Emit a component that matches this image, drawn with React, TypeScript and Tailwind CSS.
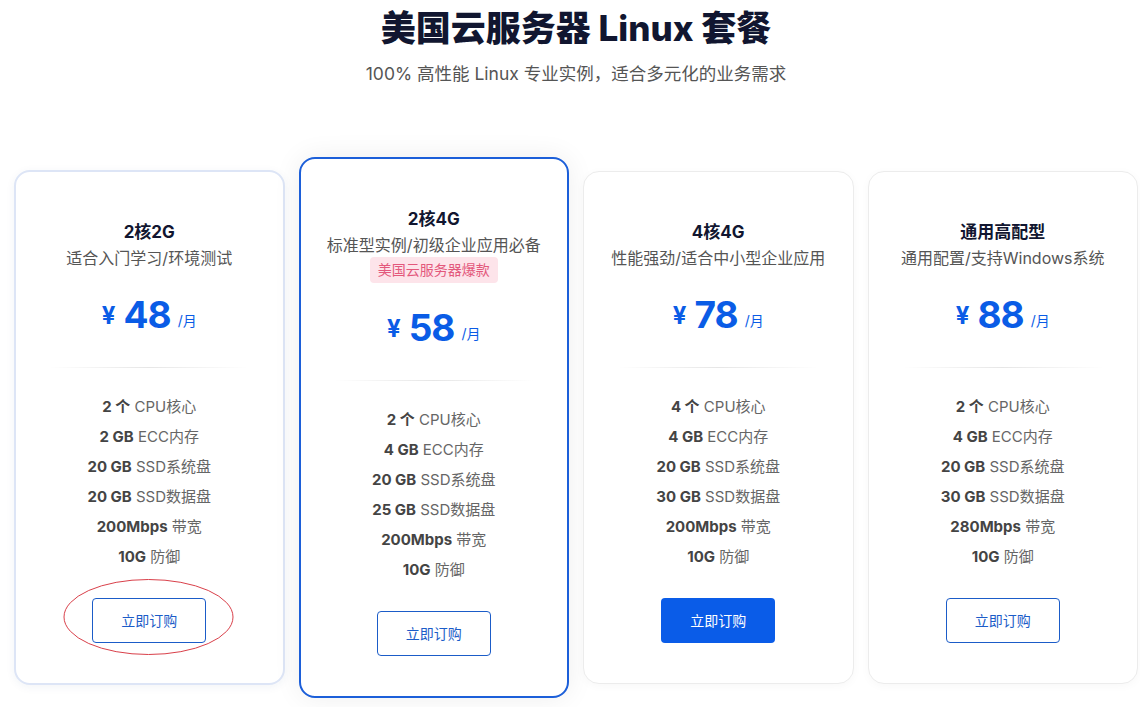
type Feature = { strong: string; rest: string };

interface Plan {
  name: string;
  desc: string;
  price: string;
  badge?: string;
  features: Feature[];
  variant: "soft" | "featured" | "plain";
  filled?: boolean;
  circled?: boolean;
}

const plans: Plan[] = [
  {
    name: "2核2G",
    desc: "适合入门学习/环境测试",
    price: "48",
    variant: "soft",
    circled: true,
    features: [
      { strong: "2 个", rest: "CPU核心" },
      { strong: "2 GB", rest: "ECC内存" },
      { strong: "20 GB", rest: "SSD系统盘" },
      { strong: "20 GB", rest: "SSD数据盘" },
      { strong: "200Mbps", rest: "带宽" },
      { strong: "10G", rest: "防御" },
    ],
  },
  {
    name: "2核4G",
    desc: "标准型实例/初级企业应用必备",
    badge: "美国云服务器爆款",
    price: "58",
    variant: "featured",
    features: [
      { strong: "2 个", rest: "CPU核心" },
      { strong: "4 GB", rest: "ECC内存" },
      { strong: "20 GB", rest: "SSD系统盘" },
      { strong: "25 GB", rest: "SSD数据盘" },
      { strong: "200Mbps", rest: "带宽" },
      { strong: "10G", rest: "防御" },
    ],
  },
  {
    name: "4核4G",
    desc: "性能强劲/适合中小型企业应用",
    price: "78",
    variant: "plain",
    filled: true,
    features: [
      { strong: "4 个", rest: "CPU核心" },
      { strong: "4 GB", rest: "ECC内存" },
      { strong: "20 GB", rest: "SSD系统盘" },
      { strong: "30 GB", rest: "SSD数据盘" },
      { strong: "200Mbps", rest: "带宽" },
      { strong: "10G", rest: "防御" },
    ],
  },
  {
    name: "通用高配型",
    desc: "通用配置/支持Windows系统",
    price: "88",
    variant: "plain",
    features: [
      { strong: "2 个", rest: "CPU核心" },
      { strong: "4 GB", rest: "ECC内存" },
      { strong: "20 GB", rest: "SSD系统盘" },
      { strong: "30 GB", rest: "SSD数据盘" },
      { strong: "280Mbps", rest: "带宽" },
      { strong: "10G", rest: "防御" },
    ],
  },
];

const cardStyles = {
  soft: "border-2 border-[#dde5f6] shadow-[0_2px_10px_rgba(40,60,120,0.06)]",
  featured: "border-2 border-[#1c5fd9] shadow-[0_0_28px_rgba(0,0,0,0.07)]",
  plain: "border border-[#ececec] shadow-[0_2px_10px_rgba(0,0,0,0.03)]",
};

function PlanCard({ plan }: { plan: Plan }) {
  return (
    <div
      className={`flex flex-col items-center rounded-[16px] bg-white pt-[48px] pb-[40px] ${cardStyles[plan.variant]}`}
    >
      <div className="text-[17px] leading-[24px] font-bold text-[#111630]">{plan.name}</div>
      <div className="mt-[2px] text-[16px] leading-[24px] text-[#555]">{plan.desc}</div>
      {plan.badge && (
        <div className="rounded-[4px] bg-[#fde4ea] px-[8px] text-[14px] leading-[26px] text-[#e3587c]">
          {plan.badge}
        </div>
      )}

      <div className="mt-[20px] flex h-[48px] items-center text-[#0a5ce6]">
        <span className="mr-[8px] mt-[4px] text-[24px] font-bold">¥</span>
        <span className="text-[37px] leading-none font-bold tracking-tight">{plan.price}</span>
        <span className="ml-[7px] mt-[12px] text-[14px]">/月</span>
      </div>

      <div className="mt-[29px] h-px w-[200px] bg-gradient-to-r from-transparent via-[#e6e6e6] to-transparent" />

      <ul className="mt-[24px] flex flex-col items-center">
        {plan.features.map((f) => (
          <li key={f.strong + f.rest} className="text-[15px] leading-[30px] text-[#666]">
            <span className="font-bold text-[#444]">{f.strong}</span> {f.rest}
          </li>
        ))}
      </ul>

      <div className="relative mt-[26px]">
        {plan.filled ? (
          <button className="h-[45px] w-[114px] rounded-[4px] bg-[#0a5ce8] text-[14px] text-white">立即订购</button>
        ) : (
          <button className="h-[45px] w-[114px] rounded-[4px] border border-[#1b5cc8] bg-white text-[14px] text-[#1b5cc8]">
            立即订购
          </button>
        )}
        {plan.circled && (
          <svg
            className="pointer-events-none absolute left-[-29px] top-[-19px]"
            width="172"
            height="80"
            viewBox="0 0 172 80"
          >
            <ellipse cx="85.5" cy="38" rx="84.5" ry="37.5" fill="none" stroke="#d9404a" strokeWidth="1" />
          </svg>
        )}
      </div>
    </div>
  );
}

export default function App() {
  return (
    <div className="min-h-[707px] bg-white pl-[14px] pr-[2px] font-['Inter','Noto_Sans_CJK_SC',sans-serif]">
      <div className="flex flex-col items-center pt-[6px]">
        <h1 className="text-[35px] leading-[44px] font-extrabold text-[#111630]">美国云服务器 Linux 套餐</h1>
        <p className="mt-[12px] text-[17.5px] leading-[24px] text-[#555]">100% 高性能 Linux 专业实例，适合多元化的业务需求</p>
      </div>

      <div className="mt-[71px] grid grid-cols-4 items-center gap-[14px]">
        {plans.map((p) => (
          <PlanCard key={p.name} plan={p} />
        ))}
      </div>
    </div>
  );
}
